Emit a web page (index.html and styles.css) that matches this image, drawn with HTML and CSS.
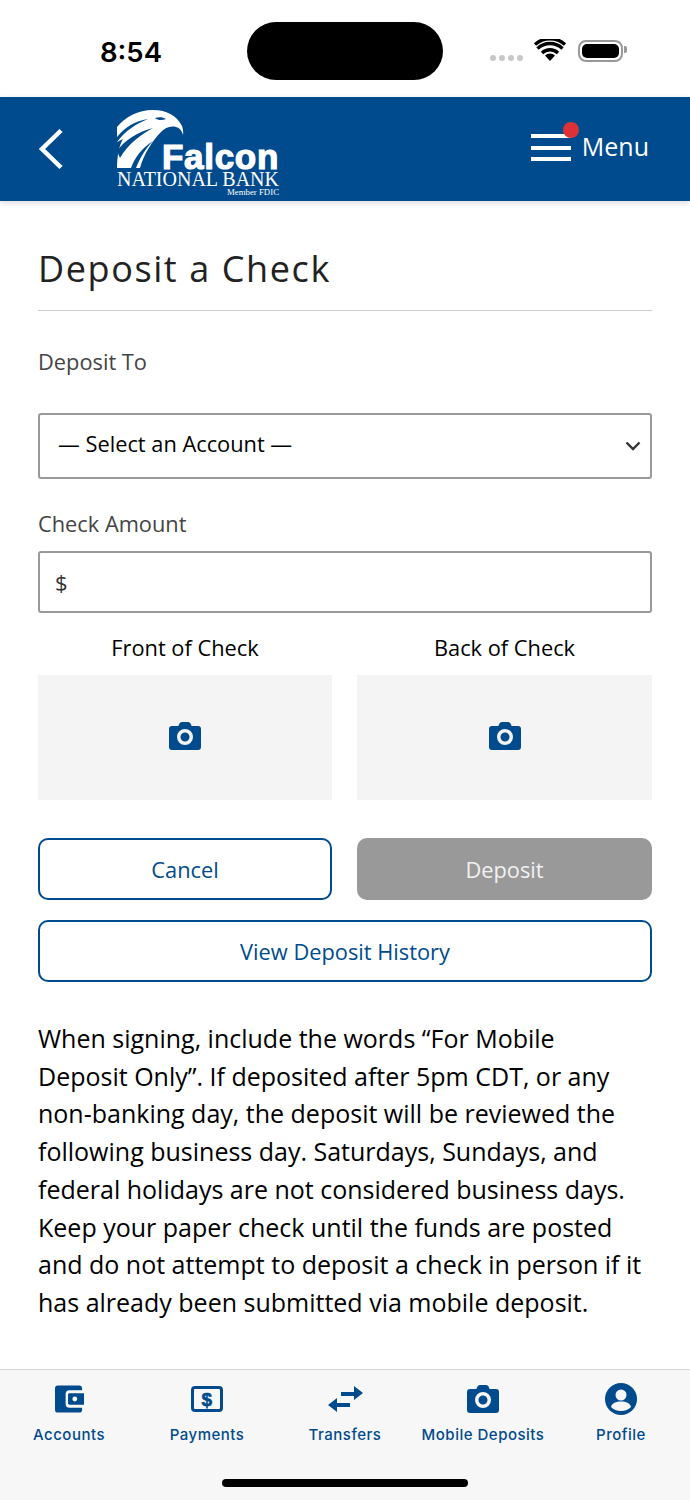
FILE: index.html
```html
<!DOCTYPE html>
<html lang="en">
<head>
    <meta charset="UTF-8">
    <meta name="viewport" content="width=device-width, initial-scale=1.0">
    <title>Deposit a Check</title>
    <link rel="stylesheet" href="styles.css">
</head>
<body>

    <!-- Status bar -->
    <div class="status-bar">
        <span class="time">8:54</span>
        <div class="island"></div>
        <div class="status-icons">
            <div class="signal"><i></i><i></i><i></i><i></i></div>
            <svg class="wifi" viewBox="0 0 32 22" width="32" height="22">
                <path d="M16 22l-5-5.600a7.400 7.400 0 0 1 10 0z" fill="#000"/>
                <path d="M3.500 9.600a18 18 0 0 1 25 0M8 14a11.500 11.500 0 0 1 16 0" fill="none" stroke="#000" stroke-width="3.400"/>
                <path d="M1 5.600a22 22 0 0 1 30 0" fill="none" stroke="#000" stroke-width="3.400"/>
            </svg>
            <div class="battery"><div class="battery-fill"></div></div>
        </div>
    </div>

    <!-- Header -->
    <header class="top-bar">
        <svg class="back" viewBox="0 0 26 42" width="26" height="42">
            <path d="M23 2.500L4 21l19 18.500" fill="none" stroke="#fff" stroke-width="4.500"/>
        </svg>
        <div class="logo">
            <svg class="eagle" viewBox="0 0 67 58" width="67" height="58">
                <path fill="#fff" d="M0 17C8 7 21 0 36 0c14 0 24 6 29 16 1 3 1.500 6 1 9-1-4-3-7-7-8-6-1.500-11 1-15 5-9 9-17 22-21 36H0c0-12 2-22 6-29l-6 3z"/>
                <path fill="#004b8d" d="M0 27C8 17 18 11 31 9 19 14 9 20 0 32zM0 41C8 30 20 22 36 18 23 25 11 34 3 48zM14 58c4-11 11-20 22-27-8 8-13 17-17 27zM38 8c4-1.500 8-1 11 1-4 1.500-8 1.500-11-1z"/>
            </svg>
            <span class="logo-name">Falcon</span>
            <span class="logo-bank">NATIONAL BANK</span>
            <span class="logo-fdic">Member FDIC</span>
        </div>
        <div class="menu">
            <div class="burger">
                <i></i><i></i><i></i>
                <span class="dot"></span>
            </div>
            <span>Menu</span>
        </div>
    </header>

    <main class="content">
        <h1>Deposit a Check</h1>

        <label class="field-label first">Deposit To</label>
        <div class="select-box">
            <span>— Select an Account —</span>
            <svg viewBox="0 0 16 10" width="16" height="10">
                <path d="M1.500 1.500L8 8l6.500-6.500" fill="none" stroke="#333" stroke-width="2.400"/>
            </svg>
        </div>

        <label class="field-label">Check Amount</label>
        <div class="input-box">$</div>

        <div class="photos">
            <div class="photo">
                <p>Front of Check</p>
                <div class="photo-box">
                    <svg width="32" height="28"><use href="#camera"/></svg>
                </div>
            </div>
            <div class="photo">
                <p>Back of Check</p>
                <div class="photo-box">
                    <svg width="32" height="28"><use href="#camera"/></svg>
                </div>
            </div>
        </div>

        <div class="buttons">
            <button class="btn btn-outline">Cancel</button>
            <button class="btn btn-disabled">Deposit</button>
        </div>
        <button class="btn btn-outline btn-wide">View Deposit History</button>

        <p class="notice">When signing, include the words “For Mobile Deposit Only”. If deposited after 5pm CDT, or any <span class="nowrap">non-banking</span> day, the deposit will be reviewed the following business day. Saturdays, Sundays, and federal holidays are not considered business days. Keep your paper check until the funds are posted and do not attempt to deposit a check in person if it has already been submitted via mobile deposit.</p>
    </main>

    <!-- Bottom tabs -->
    <nav class="tabs">
        <div class="tab">
            <div class="tab-icon">
                <svg viewBox="0 0 30 28" width="29" height="28">
                    <path fill="#004b8d" d="M3 0h22a3 3 0 0 1 3 3v2H15a4 4 0 0 0-4 4v10a4 4 0 0 0 4 4h13v2a3 3 0 0 1-3 3H3a3 3 0 0 1-3-3V3a3 3 0 0 1 3-3z"/>
                    <path fill="#004b8d" d="M15 8h15v12H15a1.500 1.500 0 0 1-1.500-1.500v-9A1.500 1.500 0 0 1 15 8z"/>
                    <circle cx="20.500" cy="14" r="2.500" fill="#f7f7f7"/>
                </svg>
            </div>
            <span>Accounts</span>
        </div>
        <div class="tab">
            <div class="tab-icon">
                <svg viewBox="0 0 32 26" width="32" height="26">
                    <rect x="1.500" y="1.500" width="29" height="23" rx="2.500" fill="none" stroke="#004b8d" stroke-width="3"/>
                    <text x="16" y="19.500" class="dollar">$</text>
                </svg>
            </div>
            <span>Payments</span>
        </div>
        <div class="tab">
            <div class="tab-icon">
                <svg viewBox="0 0 35 26" width="35" height="26">
                    <path fill="#004b8d" d="M13 6h13V0l9 7-9 7v-4H13zM22 17H9v-5L0 19l9 7v-5h13z"/>
                </svg>
            </div>
            <span>Transfers</span>
        </div>
        <div class="tab">
            <div class="tab-icon">
                <svg width="32" height="28"><use href="#camera"/></svg>
            </div>
            <span>Mobile Deposits</span>
        </div>
        <div class="tab">
            <div class="tab-icon">
                <svg viewBox="0 0 32 32" width="32" height="32">
                    <circle cx="16" cy="16" r="16" fill="#004b8d"/>
                    <circle cx="16" cy="12" r="5.500" fill="#f7f7f7"/>
                    <path fill="#f7f7f7" d="M6 24c1-4 5-5.500 10-5.500S25 20 26 24c-2.500 2.500-6 4-10 4s-7.500-1.500-10-4z"/>
                </svg>
            </div>
            <span>Profile</span>
        </div>
        <div class="home-bar"></div>
    </nav>

    <svg class="defs" width="0" height="0">
        <symbol id="camera" viewBox="0 0 32 28">
            <path fill="#004b8d" fill-rule="evenodd" d="M10 2.500C10.500 1 11.500 0 13 0h6c1.500 0 2.500 1 3 2.500l.6 1.500H29a3 3 0 0 1 3 3v18a3 3 0 0 1-3 3H3a3 3 0 0 1-3-3V7a3 3 0 0 1 3-3h6.400zM16 7a8 8 0 1 0 0 16 8 8 0 0 0 0-16zm0 3.500a4.500 4.500 0 1 1 0 9 4.500 4.500 0 0 1 0-9z"/>
        </symbol>
    </svg>

</body>
</html>
```
FILE: styles.css
```css
body {
    margin: 0;
    min-height: 100vh;
    display: flex;
    flex-direction: column;
    font-family: 'Open Sans', sans-serif;
    background-color: white;
    color: #000;
}

.defs {
    position: absolute;
}

/* Status bar */
.status-bar {
    height: 97px;
    display: flex;
    align-items: center;
    padding-top: 6px;
    box-sizing: border-box;
    padding-left: 100px;
}

.time {
    font-family: Inter, sans-serif;
    font-size: 27.500px;
    font-weight: 600;
    width: 147px;
}

.island {
    width: 196px;
    height: 58px;
    border-radius: 29px;
    background-color: #000;
    margin-top: -2px;
}

.status-icons {
    display: flex;
    align-items: center;
    margin-left: 47px;
}

.signal {
    display: flex;
    gap: 3px;
    margin-top: 12px;
    margin-right: 11px;
}

.signal i {
    width: 6px;
    height: 6px;
    border-radius: 50%;
    background-color: #c8c8c8;
}

.wifi {
    margin-top: -4px;
    margin-right: 12px;
}

.battery {
    position: relative;
    width: 45px;
    height: 22px;
    border: 2px solid #999;
    border-radius: 8px;
    padding: 2px;
    box-sizing: border-box;
    margin-top: -2px;
}

.battery::after {
    content: "";
    position: absolute;
    right: -6px;
    top: 4px;
    width: 3px;
    height: 7px;
    background-color: #999;
    border-radius: 0 2px 2px 0;
}

.battery-fill {
    height: 100%;
    background-color: #000;
    border-radius: 5px;
}

/* Header */
.top-bar {
    height: 104px;
    background-color: #004b8d;
    display: flex;
    align-items: center;
    padding: 0 41px 0 38px;
    box-shadow: 0 2px 6px rgba(0, 0, 0, 0.15);
    color: white;
}

.back {
    margin-right: 53px;
}

.logo {
    position: relative;
    width: 162px;
    height: 86px;
    box-sizing: border-box;
    padding-top: 38px;
    display: flex;
    flex-direction: column;
    align-items: flex-end;
}

.eagle {
    position: absolute;
    left: 0;
    top: 4px;
}

.logo-name {
    font-family: 'Liberation Sans', sans-serif;
    font-weight: 700;
    font-size: 35px;
    line-height: 26px;
    letter-spacing: 0.7px;
    -webkit-text-stroke: 1.200px white;
}

.logo-bank {
    margin-top: 1px;
    font-family: 'Liberation Serif', serif;
    font-size: 20px;
    line-height: 17px;
    white-space: nowrap;
}

.logo-fdic {
    font-family: 'Liberation Serif', serif;
    font-size: 8.800px;
    line-height: 8px;
    white-space: nowrap;
}

.menu {
    margin-left: auto;
    display: flex;
    align-items: center;
    gap: 11px;
    font-size: 25px;
    margin-top: -6px;
}

.burger {
    position: relative;
    width: 40px;
    display: flex;
    flex-direction: column;
    gap: 7.500px;
    margin-top: 3px;
}

.burger i {
    height: 4px;
    background-color: white;
}

.dot {
    position: absolute;
    right: -8px;
    top: -12px;
    width: 16px;
    height: 16px;
    border-radius: 50%;
    background-color: #dc3237;
}

/* Form */
.content {
    padding: 0 38px;
    flex: 1;
}

h1 {
    margin: 0;
    padding: 42px 0 16px;
    font-size: 36px;
    line-height: 51px;
    font-weight: 500;
    letter-spacing: 1.600px;
    color: #222;
    border-bottom: 1px solid #ccc;
}

.field-label {
    display: block;
    font-size: 21.800px;
    line-height: 30px;
    color: #444;
    margin: 30px 0 12px;
}

.field-label.first {
    margin: 36px 0 36px;
}

.select-box {
    height: 66px;
    box-sizing: border-box;
    border: 2px solid #999;
    border-radius: 3px;
    display: flex;
    align-items: center;
    justify-content: space-between;
    padding: 0 9px 6px 18px;
    font-size: 21.800px;
}

.select-box svg {
    margin-top: 6px;
}

.input-box {
    height: 62px;
    box-sizing: border-box;
    border: 2px solid #999;
    border-radius: 3px;
    display: flex;
    align-items: center;
    padding: 0 0 1px 15px;
    font-size: 22px;
    color: #333;
}

.photos {
    display: grid;
    grid-template-columns: 294px 1fr;
    gap: 25px;
    margin-top: 19px;
}

.photo {
    text-align: center;
}

.photo p {
    margin: 0 0 11px;
    font-size: 21.800px;
    line-height: 32px;
}

.photo-box {
    height: 125px;
    box-sizing: border-box;
    padding-bottom: 3px;
    background-color: #f4f4f4;
    display: flex;
    align-items: center;
    justify-content: center;
}

.buttons {
    display: grid;
    grid-template-columns: 294px 1fr;
    gap: 25px;
    margin-top: 38px;
}

.btn {
    height: 62px;
    font-family: 'Open Sans', sans-serif;
    font-size: 21.800px;
    border-radius: 10px;
    box-sizing: border-box;
    padding: 0;
}

.btn-outline {
    background-color: white;
    color: #004b8d;
    border: 2px solid #004b8d;
}

.btn-disabled {
    background-color: #999;
    color: #f2f2f2;
    border: none;
}

.btn-wide {
    display: block;
    width: 100%;
    margin-top: 20px;
}

.notice {
    margin: 38px 5px 0 0;
    font-size: 25px;
    line-height: 37.700px;
}

.nowrap {
    white-space: nowrap;
}

/* Tabs */
.tabs {
    position: relative;
    height: 131px;
    box-sizing: border-box;
    border-top: 1px solid #d4d4d4;
    background-color: #f7f7f7;
    display: flex;
    justify-content: space-around;
    padding: 13px 0 0;
}

.tab {
    width: 138px;
    display: flex;
    flex-direction: column;
    align-items: center;
    color: #004b8d;
    font-family: Inter, sans-serif;
    font-weight: 500;
    font-size: 15px;
    letter-spacing: 0.500px;
}

.tab-icon {
    height: 32px;
    display: flex;
    align-items: center;
    justify-content: center;
}

.tab span {
    margin-top: 10px;
    white-space: nowrap;
}

.dollar {
    font-family: 'Liberation Sans', sans-serif;
    font-size: 19px;
    font-weight: 700;
    fill: #004b8d;
    stroke: #004b8d;
    stroke-width: 0.600px;
    text-anchor: middle;
}

.home-bar {
    position: absolute;
    left: 222px;
    top: 109px;
    width: 246px;
    height: 8px;
    border-radius: 4px;
    background-color: #000;
}
```
